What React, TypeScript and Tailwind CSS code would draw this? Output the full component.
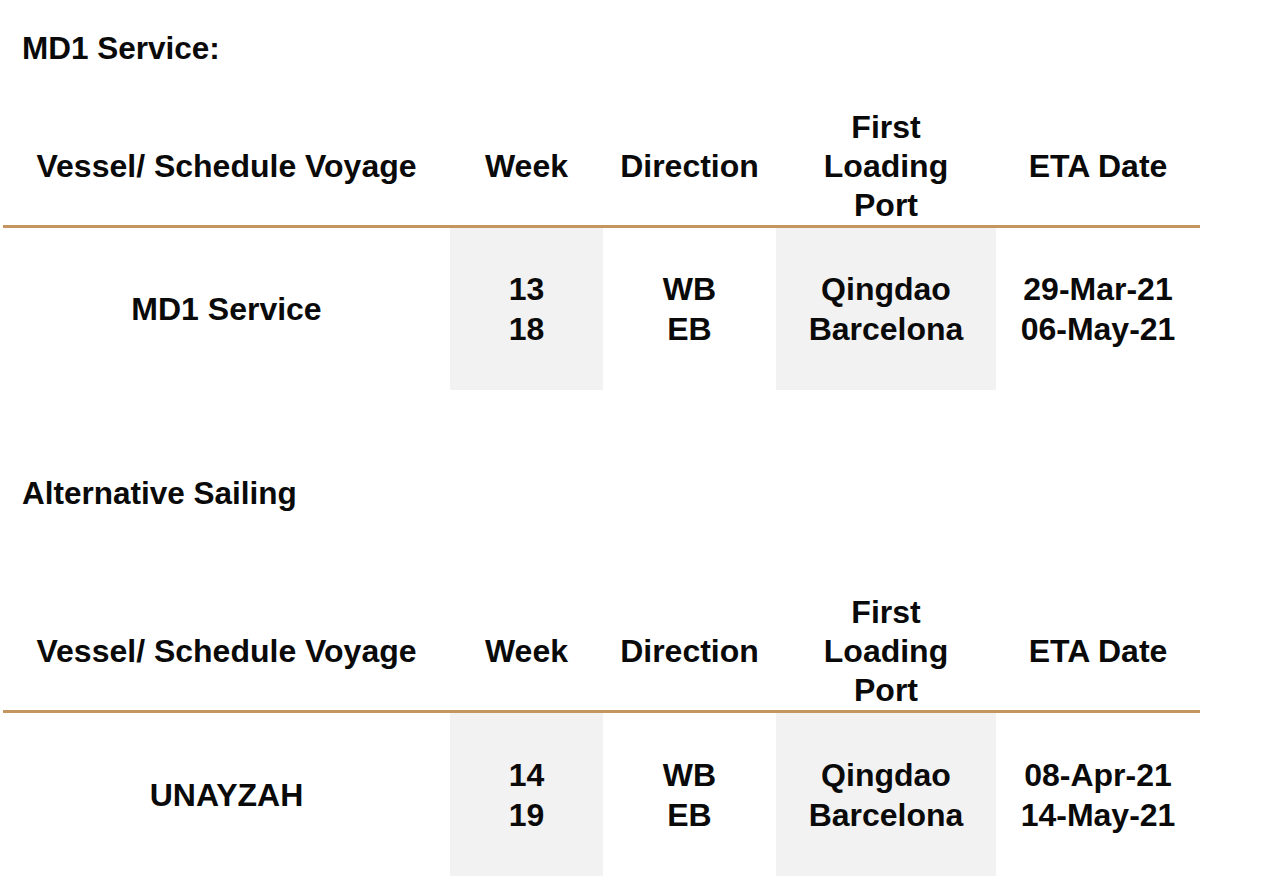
import React from 'react';

type Sailing = {
  vessel: string;
  weeks: string[];
  directions: string[];
  ports: string[];
  etas: string[];
};

const font = { fontFamily: '"Liberation Sans", Arial, sans-serif' };

function ScheduleTable({ row, bodyHeight }: { row: Sailing; bodyHeight: string }) {
  const cols = 'grid grid-cols-[447px_153px_173px_220px_204px]';

  return (
    <div className="ml-[3px] w-[1197px]">
      {/* Header */}
      <div className={`${cols} h-[117px] items-center text-center leading-[39px]`}>
        <div>Vessel/ Schedule Voyage</div>
        <div>Week</div>
        <div>Direction</div>
        <div>
          First
          <br />
          Loading
          <br />
          Port
        </div>
        <div>ETA Date</div>
      </div>
      <div className="h-[3px] bg-[#c4955f]" />

      {/* Body */}
      <div className={`${cols} ${bodyHeight} text-center leading-[40px]`}>
        <div className="flex items-center justify-center">{row.vessel}</div>
        <div className="flex flex-col items-center justify-center bg-[#f2f2f2]">
          {row.weeks.map((w) => (
            <span key={w}>{w}</span>
          ))}
        </div>
        <div className="flex flex-col items-center justify-center">
          {row.directions.map((d) => (
            <span key={d}>{d}</span>
          ))}
        </div>
        <div className="flex flex-col items-center justify-center bg-[#f2f2f2]">
          {row.ports.map((p) => (
            <span key={p}>{p}</span>
          ))}
        </div>
        <div className="flex flex-col items-center justify-center">
          {row.etas.map((e) => (
            <span key={e}>{e}</span>
          ))}
        </div>
      </div>
    </div>
  );
}

export default function App() {
  const md1: Sailing = {
    vessel: 'MD1 Service',
    weeks: ['13', '18'],
    directions: ['WB', 'EB'],
    ports: ['Qingdao', 'Barcelona'],
    etas: ['29-Mar-21', '06-May-21'],
  };

  const alternative: Sailing = {
    vessel: 'UNAYZAH',
    weeks: ['14', '19'],
    directions: ['WB', 'EB'],
    ports: ['Qingdao', 'Barcelona'],
    etas: ['08-Apr-21', '14-May-21'],
  };

  return (
    <div
      className="min-h-[892px] w-[1280px] bg-white text-[32px] font-bold text-[#0a0a0a]"
      style={font}
    >
      <div className="pt-[28px]">
        <h2 className="pl-[22px] text-[31.5px] leading-[40px]">MD1 Service:</h2>
      </div>

      <div className="mt-[40px]">
        <ScheduleTable row={md1} bodyHeight="h-[162px]" />
      </div>

      <h2 className="mt-[83px] pl-[22px] text-[31.5px] leading-[40px]">Alternative Sailing</h2>

      <div className="mt-[80px]">
        <ScheduleTable row={alternative} bodyHeight="h-[163px]" />
      </div>
    </div>
  );
}
